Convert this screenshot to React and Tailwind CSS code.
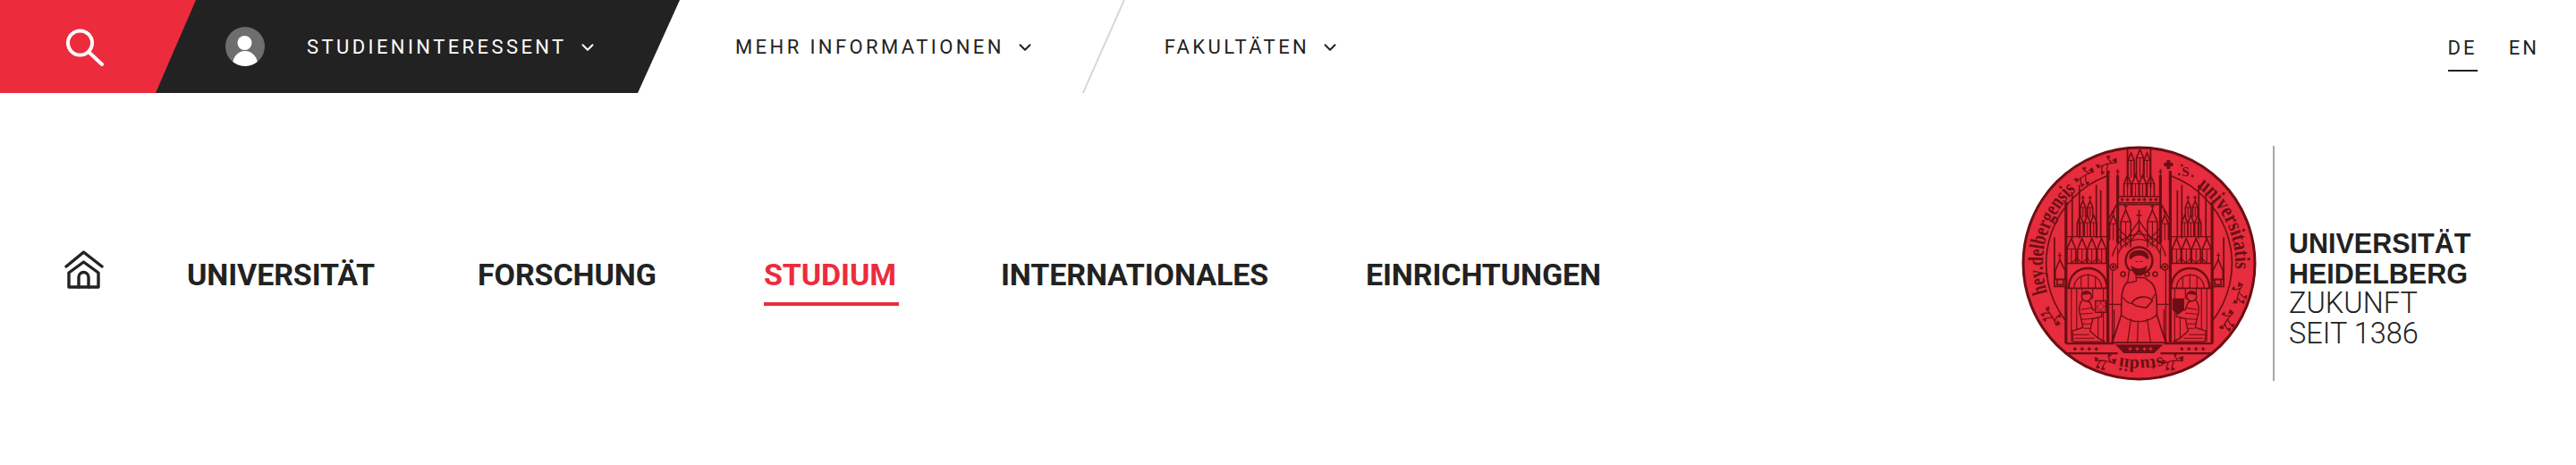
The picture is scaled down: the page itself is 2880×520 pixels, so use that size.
import { ChevronDown } from 'lucide-react';

const DARK = '#6b0f14';
const RED = '#e62c3d';

const mainLinks = [
  { label: 'UNIVERSITÄT', width: 'w-[325px]' },
  { label: 'FORSCHUNG', width: 'w-[320px]' },
  { label: 'STUDIUM', width: 'w-[265px]', active: true },
  { label: 'INTERNATIONALES', width: 'w-[408px]' },
  { label: 'EINRICHTUNGEN', width: 'w-[270px]' },
];

function SearchIcon() {
  return (
    <svg viewBox="0 0 44 44" className="w-11 h-11" fill="none" stroke="#fff" strokeWidth="4" strokeLinecap="round">
      <circle cx="15.5" cy="18" r="13.5" />
      <path d="M25 28 L40 42" />
    </svg>
  );
}

function Avatar() {
  return (
    <svg viewBox="0 0 44 44" className="w-11 h-11">
      <defs>
        <clipPath id="avatarClip">
          <circle cx="22" cy="22" r="22" />
        </clipPath>
      </defs>
      <circle cx="22" cy="22" r="22" fill="#6e6e6e" />
      <g clipPath="url(#avatarClip)" fill="#fff">
        <circle cx="21.5" cy="18" r="8" />
        <ellipse cx="22" cy="42" rx="14" ry="15" />
      </g>
    </svg>
  );
}

function HomeIcon() {
  return (
    <svg viewBox="0 0 44 44" className="w-11 h-11" fill="none" stroke="#222" strokeWidth="3.4" strokeLinecap="round" strokeLinejoin="round">
      <path d="M2 18 L21.5 2 L42 18" />
      <path d="M5 25 L21.5 13 L38 25 V41 H5 Z" />
      <path d="M16 41 V30 A5.5 5.5 0 0 1 27 30 V41" />
    </svg>
  );
}

// small gothic pinnacle: gable, centre mullion and base
function Lancet({ x, y, w, h, cross }) {
  return (
    <g>
      <path d={`M${x - w / 2} ${y + h} V${y + w * 1.2} L${x} ${y} L${x + w / 2} ${y + w * 1.2} V${y + h}`} />
      <path d={`M${x - w / 2} ${y + w * 1.2} H${x + w / 2} M${x} ${y + w * 1.2} V${y + h}`} strokeWidth="1.1" />
      {cross && <path d={`M${x} ${y} V${y - 6} M${x - 2} ${y - 4} H${x + 2}`} strokeWidth="1.3" />}
    </g>
  );
}

function Plus({ x, y, s = 2 }) {
  return <path d={`M${x - s} ${y} H${x + s} M${x} ${y - s} V${y + s}`} strokeWidth="1.5" />;
}

function Sprig({ x, y, r }) {
  return (
    <g transform={`translate(${x} ${y}) rotate(${r})`} fill={DARK} stroke={DARK}>
      <path d="M-11 1 C-4 -1 4 -1 11 1 M-5 0 L-8 5 M1 0 L-2 6 M6 0 L3 -5" fill="none" strokeWidth="1.2" />
      <path d="M11 1 l-4 -4 l5 -1 z M-8 5 l-1 4 l4 -1 z M-2 6 l-1 4 l4 -1 z M3 -5 l-1 -4 l4 1 z M-11 1 l-1 -4 l4 1 z" strokeWidth="0.6" />
    </g>
  );
}

function Knight({ shield }) {
  return (
    <g>
      {/* figure kneels towards the saint */}
      <path d="M-63 40 C-68 46 -68 54 -65 62 L-63 72 L-75 76 L-74 88 L-38 88 L-46 84 L-55 76 L-52 62 L-42 60 L-42 54 L-52 52 L-55 44 Z" fill={RED} strokeWidth="1.4" />
      <path d="M-65 52 L-53 50 M-66 57 L-52 56 M-65 63 L-52 62 M-64 68 L-54 68 M-62 73 L-54 73 M-74 80 L-56 80 M-72 84 L-50 84" strokeWidth="1.1" />
      <circle cx="-59" cy="37" r="5.5" fill={RED} strokeWidth="1.5" />
      <path d="M-64 35 A5.5 5.5 0 0 1 -54 34 Z" fill={DARK} strokeWidth="0.8" />
      <path d={shield ? 'M-50 40 H-38 V52 L-44 57 L-50 52 Z' : 'M-49 42 H-37 V55 H-49 Z'} fill={shield ? DARK : RED} strokeWidth="1.2" />
      {!shield && <path d="M-49 46 L-41 55 M-49 50 L-45 55 M-45 42 L-37 51 M-41 42 L-37 46 M-37 46 L-45 55 M-37 51 L-41 55 M-41 42 L-49 51 M-45 42 L-49 46" strokeWidth="0.7" />}
    </g>
  );
}

// everything that repeats on both sides of the seal is drawn once, for the left
function SealHalf({ shield }) {
  return (
    <g fill="none" stroke={DARK} strokeWidth="1.6" strokeLinejoin="miter">
      <path d="M-82 65 A105 105 0 0 1 -36 -98" />

      {/* heavy verticals */}
      <path d="M-35 -104 V90 M-24 -99 V-22 M-82 -69 V90" strokeWidth="3.2" />
      <path d="M-24 -99 V-106 M-26 -103 H-22" strokeWidth="1.4" />

      {/* central tower, left of the axis */}
      <path d="M-13 -128 V-85" strokeWidth="1.8" />
      <Lancet x={-9} y={-124} w={7} h={28} />
      <Lancet x={-13} y={-99} w={8} h={24} />
      <Lancet x={-4} y={-99} w={8} h={24} />
      <path d="M-24 -75 H0 M-24 -68 H0 M-24 -66 H0" />
      <Plus x={-19} y={-71.5} />
      <Plus x={-13} y={-71.5} />
      <Plus x={-6} y={-71.5} />
      <path d="M-24 -68 L-35 -48" />
      <Lancet x={-29} y={-54} w={8} h={28} cross />
      <Lancet x={-15} y={-60} w={11} h={42} cross />
      <path d="M-24 -40 L-9 -24 M-24 -32 L-12 -20" strokeWidth="1.3" />

      {/* side tower */}
      <path d="M-75 -78 V-28 M-67 -88 V-28 M-48 -88 V-28 M-43 -82 V-28" strokeWidth="1.7" />
      <Lancet x={-63} y={-70} w={6} h={18} cross />
      <Lancet x={-55} y={-70} w={6} h={18} cross />
      <Lancet x={-66} y={-54} w={7} h={24} />
      <Lancet x={-58} y={-54} w={7} h={24} />
      <Lancet x={-51} y={-54} w={7} h={24} />
      <path d="M-82 -30 H-35" strokeWidth="1.3" />
      <Lancet x={-76} y={-28} w={10} h={28} />
      <Lancet x={-64} y={-28} w={10} h={28} />
      <Lancet x={-53} y={-28} w={10} h={28} />
      <Lancet x={-42} y={-28} w={10} h={28} />
      <path d="M-82 0 H-35" strokeWidth="1.3" />
      <path d="M-76 0 L-70 -6 L-64 0 L-58 -6 L-53 0 L-47 -6 L-42 0" strokeWidth="1.1" />

      {/* outer buttress */}
      <path d="M-95 -29 V26 H-82" strokeWidth="1.8" />
      <path d="M-94 8 L-89 -4 L-83 8 V18 H-94 Z" />
      <path d="M-89 -4 V-12 M-91 -9 H-87" strokeWidth="1.2" />
      <rect x="-92" y="18" width="7" height="6" />

      {/* niche */}
      <path d="M-79 28 C-79 -2 -36 -2 -36 28" strokeWidth="2.4" />
      <path d="M-73 28 C-73 8 -42 8 -42 28" strokeWidth="1.2" />
      <path d="M-57 12 V28 M-65 15 V28 M-49 15 V28" strokeWidth="1.1" />
      <path d="M-82 28 H-35" strokeWidth="1.8" />
      <path d="M-76 28 V88 M-70 28 V88 M-64 28 V40 M-52 28 V40 M-46 60 V88 M-40 28 V88" strokeWidth="1.1" />
      <Knight shield={shield} />

      {/* plinth */}
      <path d="M-82 90 H-28 M-82 101 H-24" strokeWidth="2.2" />
      <Plus x={-72} y={96} />
      <Plus x={-64} y={96} />
      <Plus x={-56} y={96} />
      <Plus x={-48} y={96} />

      {/* throne side and rosette */}
      <circle cx="-29" cy="4" r="3.5" />
      <circle cx="-29" cy="4" r="1" fill={DARK} />
      <circle cx="-18" cy="12" r="2.5" />
      <circle cx="-9" cy="12" r="2.5" />
      <path d="M-35 46 H-20 M-30 8 V90" strokeWidth="1.3" />
      <path d="M-24 -18 V6 M-28 52 V86 M-31 90 L-29 80 L-27 90" strokeWidth="1.3" />
      <path d="M-24 -10 C-20 -20 -12 -26 0 -27 M-30 -8 C-26 -26 -12 -32 0 -33" strokeWidth="1.4" />
    </g>
  );
}

function Seal() {
  return (
    <svg viewBox="-132 -132 264 264" className="w-[263px] h-[263px] shrink-0">
      <defs>
        <path id="sealArcLeft" d="M-103 33 A108 108 0 0 1 -64 -87" />
        <path id="sealArcRight" d="M65 -86 A108 108 0 0 1 108 6" />
        <path id="sealArcBottom" d="M26 105 A108 108 0 0 1 -26 105" />
      </defs>
      <circle r="130" fill={RED} stroke={DARK} strokeWidth="3" />

      <SealHalf />
      <g transform="scale(-1 1)">
        <SealHalf shield />
      </g>

      {/* on the axis */}
      <g fill="none" stroke={DARK} strokeWidth="1.6">
        <Lancet x={1} y={-128} w={8} h={32} />
        <Plus x={0} y={-71.5} />
        <path d="M0 -60 V-34 M-3 -54 H3" strokeWidth="1.5" />
        <path d="M-15 -26 L0 -48 L15 -26 M-10 -24 L0 -38 L10 -24" strokeWidth="1.4" />
      </g>

      {/* enthroned saint */}
      <g fill={RED} stroke={DARK} strokeWidth="1.6">
        <circle cy="-3" r="15" strokeWidth="2.4" />
        <path d="M-30 89 L-20 58 C-20 40 -20 28 -14 22 L-6 16 H6 L14 22 C20 28 20 40 20 58 L30 89 Z" />
        <path d="M-13 89 L-9 62 M13 89 L9 62 M-2 89 L-1 64 M-20 58 C-8 68 8 68 20 58 M-18 38 C-12 48 -4 46 6 44 M18 34 C14 44 8 46 2 48" strokeWidth="1.2" fill="none" />
        <path d="M-8 44 C-2 36 10 36 15 42 L8 50 C2 48 -4 50 -8 44 Z" />
        <path d="M-13 22 L-11 8 L-4 8 L-3 20 Z" strokeWidth="1.2" />
      </g>
      <path d="M-11 -5 C-13 -18 13 -18 11 -5 L8 -5 C6 -10 -6 -10 -8 -5 Z" fill={DARK} />
      <path d="M-9 2 C-8 18 8 18 9 2 C5 7 -5 7 -9 2 Z" fill={DARK} />
      <path d="M-4 -2 H-1 M1 -2 H4" stroke={DARK} strokeWidth="1.2" />

      {/* plinth on the axis */}
      <path d="M-27 91 H27 L17 101 H-17 Z" fill={DARK} />
      <g stroke={RED} strokeWidth="1.3">
        <path d="M-12 96 H-8 M-10 94 V98 M-4 96 H0 M-2 94 V98 M4 96 H8 M6 94 V98 M11 96 H15 M13 94 V98" />
      </g>

      <Sprig x={-36} y={-111} r={-16} />
      <Sprig x={-61} y={-98} r={-30} />
      <Sprig x={-98} y={60} r={58} />
      <Sprig x={112} y={34} r={-72} />
      <Sprig x={99} y={64} r={-56} />
      <Sprig x={-38} y={110} r={8} />
      <Sprig x={38} y={110} r={-8} />

      <path d="M28 -113 h3 v-3 h4 v3 h3 v4 h-3 v3 h-4 v-3 h-3 Z" fill={DARK} />
      <g fill={DARK}>
        <circle cx="48" cy="-110" r="1.4" />
        <circle cx="60" cy="-98" r="1.4" />
        <circle cx="45" cy="-100" r="1.4" />
      </g>
      <text x="48" y="-98" fontSize="15" fontWeight="700" fill={DARK} fontFamily="'Liberation Serif', serif">S</text>

      <g fill={DARK} fontFamily="'Liberation Serif', serif" fontWeight="700">
        <text fontSize="24">
          <textPath href="#sealArcLeft" textLength="126" lengthAdjust="spacingAndGlyphs">hey.delbergensis</textPath>
        </text>
        <text fontSize="24">
          <textPath href="#sealArcRight" textLength="106" lengthAdjust="spacingAndGlyphs">universitatis</textPath>
        </text>
        <text fontSize="20">
          <textPath href="#sealArcBottom" textLength="48" lengthAdjust="spacingAndGlyphs">studii</textPath>
        </text>
      </g>
    </svg>
  );
}

function TopLink({ label, className = '' }) {
  return (
    <a href="#" className={`flex items-center pt-[2px] text-[22px] leading-none tracking-[0.155em] ${className}`}>
      <span>{label}</span>
      <ChevronDown className="ml-[12px] w-[22px] h-[22px]" strokeWidth={2.2} />
    </a>
  );
}

export default function App() {
  return (
    <div className="w-[2880px] h-[520px] bg-white flex flex-col font-['Roboto',sans-serif]">
      {/* top bar */}
      <div className="flex h-[104px] items-stretch">
        <div className="flex w-[760px] bg-[#222] [clip-path:polygon(0_0,100%_0,713px_100%,0_100%)]">
          <a href="#" className="flex w-[219px] items-center bg-[#ec2c3c] pl-[74px] [clip-path:polygon(0_0,100%_0,174px_100%,0_100%)]">
            <SearchIcon />
          </a>
          <div className="flex items-center pl-[33px]">
            <Avatar />
            <TopLink label="STUDIENINTERESSENT" className="ml-[47px] text-white" />
          </div>
        </div>
        <TopLink label="MEHR INFORMATIONEN" className="ml-[62px] text-[#222]" />
        <div className="ml-[53px] w-[48px] bg-[#d4d4d4] [clip-path:polygon(46px_0,48px_0,2px_100%,0_100%)]" />
        <TopLink label="FAKULTÄTEN" className="ml-[44px] text-[#222]" />
        <div className="ml-auto flex items-center gap-[35px] pr-[41px] pt-[2px] text-[22px] tracking-[0.14em] text-[#222]">
          <a href="#" className="relative flex h-full items-center">
            DE
            <span className="absolute bottom-[24px] left-0 right-0 h-[2px] bg-[#222]" />
          </a>
          <a href="#">EN</a>
        </div>
      </div>

      {/* main nav */}
      <div className="flex flex-1 items-start">
        <nav className="mt-[181px] flex items-start pl-[72px]">
          <a href="#" className="mr-[93px] -mt-[5px]">
            <HomeIcon />
          </a>
          {mainLinks.map((link) => (
            <a
              key={link.label}
              href="#"
              className={`${link.width} text-[34px] font-bold tracking-[-0.003em] leading-[44px] ${link.active ? 'text-[#ec2c3c]' : 'text-[#222]'}`}
            >
              <span className={`inline-block ${link.active ? 'border-b-4 border-[#ec2c3c] pb-[9px] pr-[3px]' : ''}`}>{link.label}</span>
            </a>
          ))}
        </nav>

        <div className="ml-auto mr-[118px] mt-[59px] flex h-[263px] items-stretch">
          <Seal />
          <div className="ml-[18px] w-[2px] bg-[#a8a8a8]" />
          <div className="ml-[16px] flex w-[203px] flex-col justify-end pb-[36px] text-[30.5px] leading-[33.5px] text-[#222] font-['Liberation_Sans',sans-serif]">
            <span className="font-bold whitespace-nowrap">UNIVERSITÄT</span>
            <span className="font-bold whitespace-nowrap">HEIDELBERG</span>
            <span className="font-['Roboto',sans-serif] text-[32.5px] font-light whitespace-nowrap">ZUKUNFT</span>
            <span className="font-['Roboto',sans-serif] text-[32.5px] font-light whitespace-nowrap">SEIT 1386</span>
          </div>
        </div>
      </div>
    </div>
  );
}
